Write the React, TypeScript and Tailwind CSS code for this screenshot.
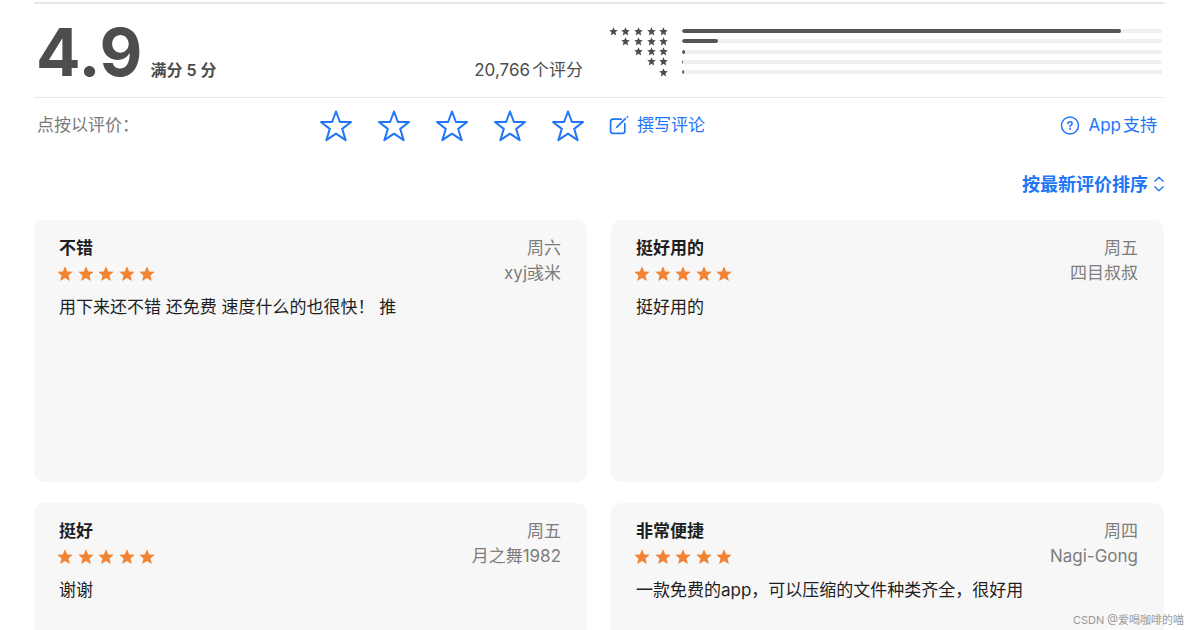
import { useState } from "react";

const ratings = [
  { stars: 5, percent: 91.5 },
  { stars: 4, percent: 7.4 },
  { stars: 3, percent: 0.6 },
  { stars: 2, percent: 0.2 },
  { stars: 1, percent: 0.4 },
];

const reviews = [
  {
    title: "不错",
    date: "周六",
    author: "xyj彧米",
    body: "用下来还不错 还免费 速度什么的也很快！ 推",
  },
  { title: "挺好用的", date: "周五", author: "四目叔叔", body: "挺好用的" },
  { title: "挺好", date: "周五", author: "月之舞1982", body: "谢谢" },
  {
    title: "非常便捷",
    date: "周四",
    author: "Nagi-Gong",
    body: "一款免费的app，可以压缩的文件种类齐全，很好用",
  },
];

const OUTLINE_STAR =
  "M16 1.5 19.9 12H31L22.2 18.9 25.7 30.2 16 23.7 6.3 30.2 9.8 18.9 1 12H12.1Z";
const SOLID_STAR =
  "M16 0.6 20.4 11 31.4 11.6 23 18.8 25.7 30 16 24.2 6.3 30 9 18.8 0.6 11.6 11.6 11Z";

function Star({ className, solid }: { className: string; solid?: boolean }) {
  return (
    <svg
      viewBox="0 0 32 32"
      className={className}
      strokeLinejoin="round"
      aria-hidden="true"
    >
      <path d={solid ? SOLID_STAR : OUTLINE_STAR} />
    </svg>
  );
}

function Summary() {
  return (
    <section className="grid grid-cols-2 gap-4 border-t-2 border-b border-[#e6e6e6] h-24">
      <div className="flex items-baseline pl-0.5 pr-2 text-[#4d4d4d]">
        <span className="text-[66px] leading-[96px] font-bold">4.9</span>
        <span className="ml-2 text-[16px] font-semibold">满分 5 分</span>
        <span className="ml-auto flex gap-0.5 text-[17px]">
          <span>20,766</span>
          <span>个评分</span>
        </span>
      </div>
      <div className="mt-[25px] mr-0.5 flex h-[45px] flex-col justify-between">
        {ratings.map((row) => (
          <div key={row.stars} className="flex h-1 items-center gap-3">
            <div className="flex w-[63px] justify-end">
              {Array.from({ length: row.stars }, (_, i) => (
                <span key={i} className="flex w-1/5 justify-center">
                  <Star solid className="size-[9px] shrink-0 fill-[#4d4d4d]" />
                </span>
              ))}
            </div>
            <div className="h-1 flex-1 overflow-hidden rounded-full bg-[#efefef]">
              <div
                className="h-full rounded-full bg-[#555]"
                style={{ width: `${row.percent}%` }}
              />
            </div>
          </div>
        ))}
      </div>
    </section>
  );
}

function Actions() {
  const [rating, setRating] = useState(0);

  return (
    <section className="grid grid-cols-2 gap-6 h-14 text-[17px]">
      <div className="flex items-center justify-between pl-[3px] pr-[3px]">
        <span className="text-[#7a7a7a]">点按以评价：</span>
        <div className="flex gap-[26px]">
          {[1, 2, 3, 4, 5].map((n) => (
            <button
              key={n}
              type="button"
              aria-label={`${n} 星`}
              onClick={() => setRating(n)}
            >
              <Star
                className={
                  n <= rating
                    ? "size-8 fill-[#2176f7] stroke-[#2176f7] stroke-2"
                    : "size-8 fill-none stroke-[#2176f7] stroke-2"
                }
              />
            </button>
          ))}
        </div>
      </div>
      <div className="flex items-center justify-between pr-[7px] text-[#2176f7]">
        <button type="button" className="-ml-0.5 flex items-center gap-2">
          <svg
            viewBox="0 0 20 20"
            className="size-5 fill-none stroke-current stroke-[1.7]"
            strokeLinecap="round"
            strokeLinejoin="round"
            aria-hidden="true"
          >
            <path d="M12.2 3.2H4Q1.6 3.2 1.6 5.6V15Q1.6 17.4 4 17.4H13.4Q15.8 17.4 15.8 15V7.6" />
            <path d="M7.8 11.2 16.4 2.6M18.3 0.9 18.5 0.8" />
          </svg>
          撰写评论
        </button>
        <a href="#support" className="flex items-center gap-2">
          <svg
            viewBox="0 0 20 20"
            className="size-5 fill-none stroke-current"
            strokeLinecap="round"
            strokeLinejoin="round"
            aria-hidden="true"
          >
            <circle cx="10" cy="9.5" r="8.5" strokeWidth="1.5" />
            <path
              d="M7.9 7.6Q8 5.8 10 5.8T12.1 7.5Q12.1 8.5 11 9.2T10 10.7"
              strokeWidth="1.6"
            />
            <circle cx="10" cy="13" r="0.4" strokeWidth="1.2" />
          </svg>
          <span className="flex gap-0.5">
            <span>App</span>
            <span>支持</span>
          </span>
        </a>
      </div>
    </section>
  );
}

function SortMenu() {
  return (
    <div className="flex h-[66px] items-center justify-end gap-1.5 pb-1.5 text-[#2176f7]">
      <select
        aria-label="排序方式"
        className="appearance-none bg-transparent text-[18px] font-semibold"
      >
        <option>按最新评价排序</option>
      </select>
      <svg
        viewBox="0 0 10 16"
        className="h-4 w-2.5 fill-none stroke-current stroke-[1.3]"
        strokeLinecap="round"
        strokeLinejoin="round"
        aria-hidden="true"
      >
        <path d="M0.8 5.2 5 1.2 9.2 5.2M0.8 10.8 5 14.8 9.2 10.8" />
      </svg>
    </div>
  );
}

function ReviewCard({ review }: { review: (typeof reviews)[number] }) {
  return (
    <article className="min-h-[262px] rounded-[10px] bg-[#f7f7f7] py-4 pr-[26px] pl-[25px] text-[17px] leading-[25px] text-[#1f1f1f]">
      <div className="flex justify-between">
        <h3 className="font-bold">{review.title}</h3>
        <span className="text-[#7d7d7d]">{review.date}</span>
      </div>
      <div className="flex items-center justify-between">
        <div
          className="-ml-0.5 flex w-[98px] justify-between"
          role="img"
          aria-label="5 星"
        >
          {[1, 2, 3, 4, 5].map((n) => (
            <Star key={n} solid className="size-4 fill-[#f08432]" />
          ))}
        </div>
        <span className="text-[#7d7d7d]">{review.author}</span>
      </div>
      <p className="mt-[9px]">{review.body}</p>
    </article>
  );
}

export default function App() {
  return (
    <main className="relative h-screen overflow-hidden bg-white pt-0.5 pr-7 pl-[34px] font-['Inter','Noto_Sans_CJK_SC',sans-serif]">
      <Summary />
      <Actions />
      <SortMenu />
      <div className="grid grid-cols-2 gap-x-6 gap-y-[21px]">
        {reviews.map((review) => (
          <ReviewCard key={review.title} review={review} />
        ))}
      </div>
      <span className="absolute right-2 bottom-0.5 text-[11px] text-[#9a9a9a]">
        CSDN @爱喝咖啡的喵
      </span>
    </main>
  );
}
